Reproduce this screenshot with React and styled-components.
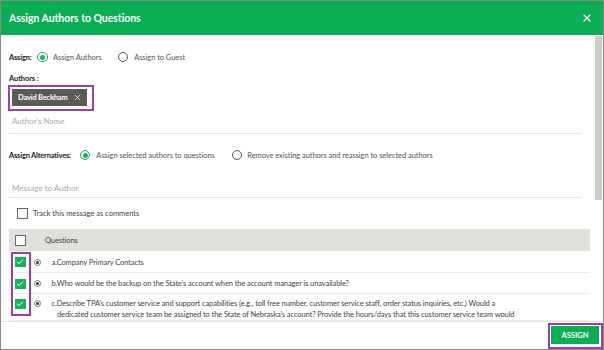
import React from 'react'
import styled, { createGlobalStyle } from 'styled-components'
import { X, Check } from 'lucide-react'

const GlobalStyle = createGlobalStyle`
  body {
    margin: 0;
    font-family: Lato, "Open Sans", sans-serif;
    color: #333;
  }
`;

const Modal = styled.div`
  width: 604px;
  height: 350px;
  box-sizing: border-box;
  border: 1px solid #8a8a8a;
  background: #fff;
  display: flex;
  flex-direction: column;
`;

const Header = styled.header`
  height: 34px;
  flex: none;
  background: #0aae55;
  color: #fff;
  display: flex;
  align-items: center;
  justify-content: space-between;
  padding: 0 10px 0 8px;
`;

const Title = styled.h1`
  margin: 0;
  font-size: 10.5px;
  font-weight: 700;
  letter-spacing: -0.05px;
`;

const CloseButton = styled.button`
  border: none;
  background: none;
  padding: 0;
  color: #fff;
  display: flex;
`;

const Main = styled.div`
  flex: 1;
  display: flex;
  min-height: 0;
  border-bottom: 1px solid #e4e4e4;
`;

const Content = styled.div`
  flex: 1;
  overflow: hidden;
  padding: 0 4px 0 8px;
  display: flex;
  flex-direction: column;

  & > * {
    flex: none;
  }
`;

const ScrollTrack = styled.div`
  width: 9px;
  flex: none;
`;

const Thumb = styled.div`
  width: 7px;
  height: 164px;
  margin: 1px 1px 0 1px;
  background: #cfccc5;
`;

const OptionRow = styled.div`
  height: 12px;
  margin-top: ${p => p.$top}px;
  display: flex;
  align-items: center;
  font-size: 7.5px;
  letter-spacing: -0.05px;
`;

const Label = styled.span`
  color: #222;
  font-weight: 700;
  letter-spacing: -0.2px;
  margin-right: ${p => p.$gap}px;
`;

const Option = styled.label`
  display: flex;
  align-items: center;
  gap: ${p => p.$gap || 5}px;
  color: #555;
  margin-right: ${p => p.$after || 0}px;
`;

const Radio = styled.span`
  width: 10.5px;
  height: 10.5px;
  box-sizing: border-box;
  border-radius: 50%;
  border: ${p => (p.$on ? '1.5px solid #1db35e' : '1px solid #555')};
  display: flex;
  align-items: center;
  justify-content: center;

  &::after {
    content: '';
    width: 5px;
    height: 5px;
    border-radius: 50%;
    background: ${p => (p.$on ? '#1db35e' : 'transparent')};
  }
`;

const FieldLabel = styled.div`
  margin-top: 10px;
  height: 12px;
  line-height: 12px;
  font-size: 7.5px;
  font-weight: 700;
  letter-spacing: -0.1px;
  color: #222;
`;

const Highlight = styled.div`
  border: 2px solid #9c3fa8;
  align-self: ${p => p.$self || 'flex-start'};
  display: flex;
`;

const ChipBox = styled(Highlight)`
  margin-left: -1px;
  padding: 2px 5px 3px 1.5px;
`;

const Chip = styled.span`
  height: 17px;
  background: #5c5a56;
  color: #fff;
  font-size: 7.5px;
  font-weight: 700;
  letter-spacing: -0.2px;
  display: flex;
  align-items: center;
  gap: 5px;
  padding: 0 5px 0 6.5px;
`;

const Field = styled.div`
  height: ${p => p.$h}px;
  box-sizing: border-box;
  padding: ${p => p.$pad}px 0 0 3px;
  margin-right: 8px;
  border-bottom: 1px solid #e6e6e6;
  font-size: 8px;
  line-height: 12px;
  color: #aaa;
`;

const TrackRow = styled.label`
  margin-top: 9px;
  height: 12px;
  display: flex;
  align-items: center;
  gap: 5px;
  padding-left: 8px;
  font-size: 7.5px;
  color: #444;
`;

const Box = styled.span`
  width: 11px;
  height: 11px;
  box-sizing: border-box;
  border: 1px solid #666;
  background: #fff;
  flex: none;
`;

const Table = styled.div`
  margin-top: 10px;
  font-size: 7.5px;
  letter-spacing: -0.1px;
  color: #444;
`;

const HeadRow = styled.div`
  height: 22px;
  background: #e1e0dc;
  display: flex;
  align-items: center;
  padding-left: 6px;
  gap: 19px;
`;

const Rows = styled.div`
  position: relative;
`;

const Row = styled.div`
  display: flex;
  align-items: flex-start;
  padding: ${p => p.$pad}px 0 0 6px;
  height: ${p => p.$h}px;
  box-sizing: border-box;
  border-bottom: 1px solid #ececec;
  overflow: hidden;
`;

const GreenBox = styled.span`
  width: 10.5px;
  height: 10px;
  margin-top: 0.5px;
  background: #17b35b;
  color: #fff;
  display: flex;
  align-items: center;
  justify-content: center;
  flex: none;
`;

const Dot = styled.span`
  width: 7px;
  height: 7px;
  box-sizing: border-box;
  border: 1px solid #777;
  border-radius: 50%;
  margin: 2px 11px 0 8px;
  flex: none;
  display: flex;
  align-items: center;
  justify-content: center;

  &::after {
    content: '';
    width: 3px;
    height: 3px;
    border-radius: 50%;
    background: #333;
  }
`;

const Question = styled.div`
  width: 462px;
  line-height: 11px;
  padding-left: 5.5px;
  text-indent: -5.5px;
`;

const ColumnMark = styled.div`
  position: absolute;
  left: 2px;
  top: 1px;
  width: 19.5px;
  height: 64px;
  box-sizing: border-box;
  border: 2px solid #9c3fa8;
`;

const Footer = styled.footer`
  flex: none;
  height: 27px;
  display: flex;
  justify-content: flex-end;
  align-items: flex-end;
`;

const ButtonBox = styled(Highlight)`
  padding: 1px 2px 3px 1px;
`;

const AssignButton = styled.button`
  width: 48px;
  height: 18px;
  border: none;
  background: #0aae55;
  color: #fff;
  font-family: inherit;
  font-size: 7.5px;
  font-weight: 700;
  padding: 0;
`;

const questions = [
  { text: 'a.Company Primary Contacts', h: 22, pad: 5.5 },
  { text: "b.Who would be the backup on the State's account when the account manager is unavailable?", h: 21, pad: 5 },
  {
    text: "c.Describe TPA's customer service and support capabilities (e.g., toll free number, customer service staff, order status inquiries, etc.) Would a dedicated customer service team be assigned to the State of Nebraska's account? Provide the hours/days that this customer service team would be available.",
    h: 27,
    pad: 4,
  },
]

export default function App() {
  return (
    <>
      <GlobalStyle />
      <Modal>
        <Header>
          <Title>Assign Authors to Questions</Title>
          <CloseButton><X size={12} strokeWidth={2.5} /></CloseButton>
        </Header>
        <Main>
          <Content>
            <OptionRow $top={16}>
              <Label $gap={6}>Assign:</Label>
              <Option $after={16}><Radio $on />Assign Authors</Option>
              <Option $gap={6}><Radio />Assign to Guest</Option>
            </OptionRow>
            <FieldLabel>Authors :</FieldLabel>
            <ChipBox>
              <Chip>David Beckham<X size={9} strokeWidth={2} /></Chip>
            </ChipBox>
            <Field $h={23} $pad={4}>Author's Name</Field>
            <OptionRow $top={15}>
              <Label $gap={9}>Assign Alternatives:</Label>
              <Option $gap={6} $after={17}><Radio $on />Assign selected authors to questions</Option>
              <Option><Radio />Remove existing authors and reassign to selected authors</Option>
            </OptionRow>
            <Field $h={37} $pad={21}>Message to Author</Field>
            <TrackRow><Box />Track this message as comments</TrackRow>
            <Table>
              <HeadRow><Box />Questions</HeadRow>
              <Rows>
                {questions.map(q => (
                  <Row key={q.text} $h={q.h} $pad={q.pad}>
                    <GreenBox><Check size={8} strokeWidth={3} /></GreenBox>
                    <Dot />
                    <Question>{q.text}</Question>
                  </Row>
                ))}
                <ColumnMark />
              </Rows>
            </Table>
          </Content>
          <ScrollTrack><Thumb /></ScrollTrack>
        </Main>
        <Footer>
          <ButtonBox $self="auto">
            <AssignButton>ASSIGN</AssignButton>
          </ButtonBox>
        </Footer>
      </Modal>
    </>
  )
}
